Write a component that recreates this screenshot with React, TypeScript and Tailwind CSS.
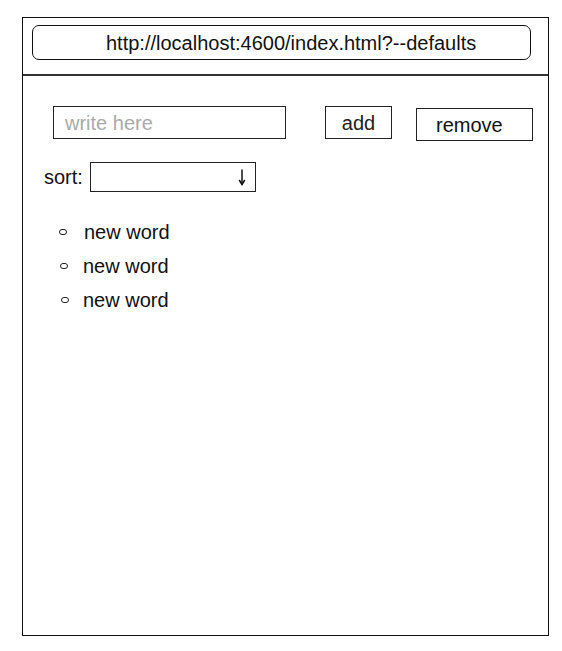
export default function App() {
  const words = [
    { dx: 'ml-[36px]', tx: 'ml-[17px]' },
    { dx: 'ml-[37px]', tx: 'ml-[15px]' },
    { dx: 'ml-[38px]', tx: 'ml-[14px]' },
  ]

  return (
    <div className="w-[562px] h-[651px] bg-white pt-[17px] pl-[22px]" style={{ fontFamily: '"Liberation Sans", Arial, sans-serif' }}>
      <div className="w-[527px] h-[619px] border border-[#111] flex flex-col">
        {/* address bar */}
        <div className="h-[58px] border-b-2 border-[#333] pt-[7px] pl-[9px]">
          <div className="w-[499px] h-[35px] rounded-[7px] border border-[#111] flex items-center pl-[73px] text-[20px] text-[#111]">
            http://localhost:4600/index.html?--defaults
          </div>
        </div>

        {/* body */}
        <div className="flex flex-col pt-[30px]">
          <div className="flex items-start">
            <div className="ml-[30px] w-[233px] h-[33px] border border-[#222] flex items-center pl-[11px] text-[20px] text-[#aaa]">
              write here
            </div>
            <div className="ml-[39px] w-[67px] h-[33px] border border-[#222] flex items-center justify-center text-[20px] text-[#222]">
              add
            </div>
            <div className="ml-[24px] mt-[2px] w-[117px] h-[33px] border border-[#222] flex items-center pl-[19px] pt-[1px] text-[20px] text-[#111]">
              remove
            </div>
          </div>

          <div className="flex items-center mt-[21px] ml-[21px]">
            <span className="text-[20px] text-[#111]">sort:</span>
            <div className="ml-[7px] w-[166px] h-[30px] border border-[#222] flex items-center justify-end pr-[9px]">
              <svg width="8" height="18" viewBox="0 0 8 18" fill="none" stroke="#111" strokeWidth="1.5" strokeLinecap="round">
                <path d="M4 2 L4 16" />
                <path d="M1.5 12.5 L4 16.5 L6.5 12.5" />
              </svg>
            </div>
          </div>

          <ul className="mt-[28px] flex flex-col gap-[11px]">
            {words.map((w, i) => (
              <li key={i} className="flex items-center h-[23px]">
                <span className={`${w.dx} w-[8px] h-[6px] rounded-full border-[1.5px] border-[#222]`} />
                <span className={`${w.tx} text-[20px] text-[#111]`}>new word</span>
              </li>
            ))}
          </ul>
        </div>
      </div>
    </div>
  )
}
